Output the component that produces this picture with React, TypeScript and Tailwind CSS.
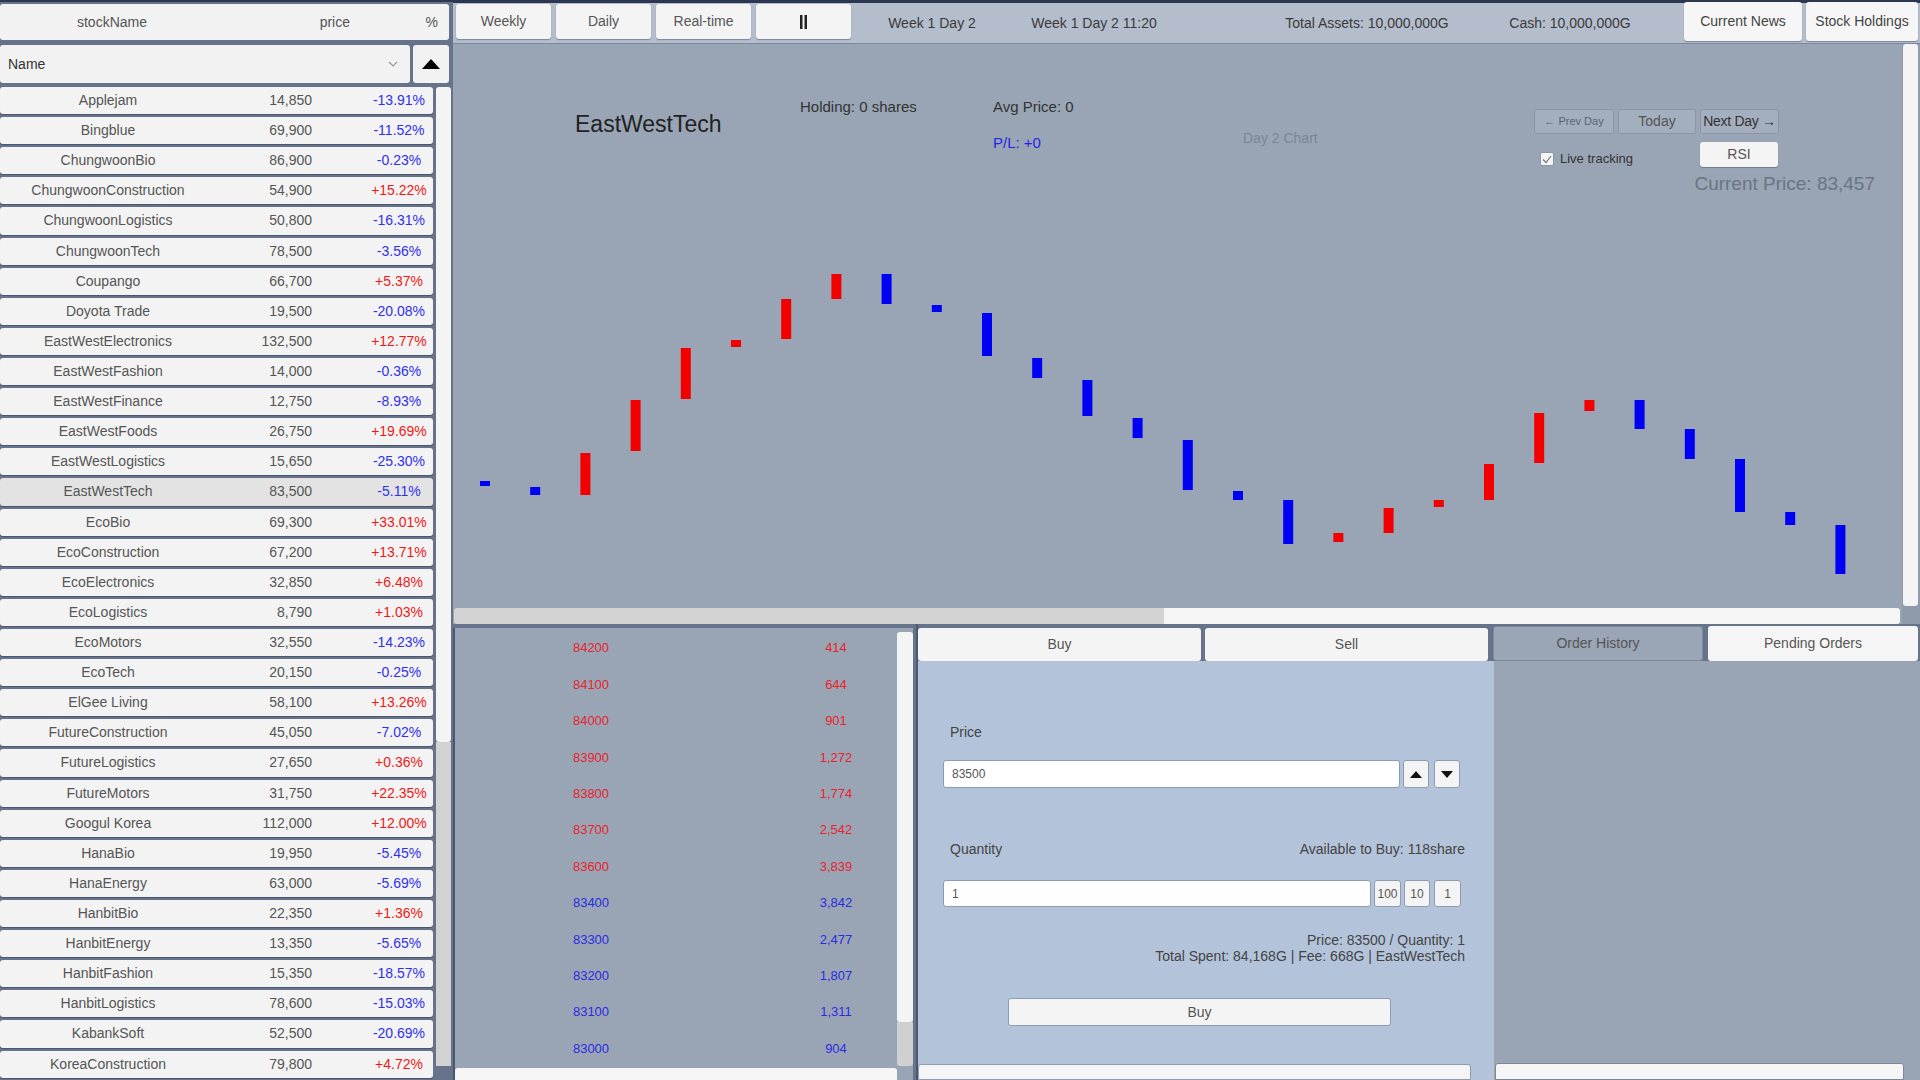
import React from "react";

const stocks: [string, string, string][] = [
  ["Applejam", "14,850", "-13.91%"],
  ["Bingblue", "69,900", "-11.52%"],
  ["ChungwoonBio", "86,900", "-0.23%"],
  ["ChungwoonConstruction", "54,900", "+15.22%"],
  ["ChungwoonLogistics", "50,800", "-16.31%"],
  ["ChungwoonTech", "78,500", "-3.56%"],
  ["Coupango", "66,700", "+5.37%"],
  ["Doyota Trade", "19,500", "-20.08%"],
  ["EastWestElectronics", "132,500", "+12.77%"],
  ["EastWestFashion", "14,000", "-0.36%"],
  ["EastWestFinance", "12,750", "-8.93%"],
  ["EastWestFoods", "26,750", "+19.69%"],
  ["EastWestLogistics", "15,650", "-25.30%"],
  ["EastWestTech", "83,500", "-5.11%"],
  ["EcoBio", "69,300", "+33.01%"],
  ["EcoConstruction", "67,200", "+13.71%"],
  ["EcoElectronics", "32,850", "+6.48%"],
  ["EcoLogistics", "8,790", "+1.03%"],
  ["EcoMotors", "32,550", "-14.23%"],
  ["EcoTech", "20,150", "-0.25%"],
  ["ElGee Living", "58,100", "+13.26%"],
  ["FutureConstruction", "45,050", "-7.02%"],
  ["FutureLogistics", "27,650", "+0.36%"],
  ["FutureMotors", "31,750", "+22.35%"],
  ["Googul Korea", "112,000", "+12.00%"],
  ["HanaBio", "19,950", "-5.45%"],
  ["HanaEnergy", "63,000", "-5.69%"],
  ["HanbitBio", "22,350", "+1.36%"],
  ["HanbitEnergy", "13,350", "-5.65%"],
  ["HanbitFashion", "15,350", "-18.57%"],
  ["HanbitLogistics", "78,600", "-15.03%"],
  ["KabankSoft", "52,500", "-20.69%"],
  ["KoreaConstruction", "79,800", "+4.72%"],
];

// [top, bottom, up] in chart coordinates
const candles: [number, number, boolean][] = [
  [437, 442, false],
  [443, 451, false],
  [409, 451, true],
  [356, 407, true],
  [304, 355, true],
  [296, 303, true],
  [255, 295, true],
  [230, 255, true],
  [230, 260, false],
  [261, 268, false],
  [269, 312, false],
  [314, 334, false],
  [336, 372, false],
  [374, 394, false],
  [396, 446, false],
  [447, 456, false],
  [456, 500, false],
  [489, 498, true],
  [464, 489, true],
  [456, 463, true],
  [420, 456, true],
  [369, 419, true],
  [356, 367, true],
  [356, 385, false],
  [385, 415, false],
  [415, 468, false],
  [468, 481, false],
  [481, 530, false],
];

const book: [string, string, boolean][] = [
  ["84200", "414", true],
  ["84100", "644", true],
  ["84000", "901", true],
  ["83900", "1,272", true],
  ["83800", "1,774", true],
  ["83700", "2,542", true],
  ["83600", "3,839", true],
  ["83400", "3,842", false],
  ["83300", "2,477", false],
  ["83200", "1,807", false],
  ["83100", "1,311", false],
  ["83000", "904", false],
];

function StockList() {
  return (
    <div className="w-[453px] h-[1080px] bg-[#66738b] flex flex-col border-t-[2px] border-[#2c3852]">
      <div className="mt-[2px] h-[36px] w-[449px] rounded-[3px] bg-[#f2f2f2] flex items-center text-[14px] text-[#555]">
        <span className="w-[224px] text-center">stockName</span>
        <span className="w-[126px] text-right">price</span>
        <span className="w-[88px] text-right">%</span>
      </div>
      <div className="mt-[5px] h-[38px] flex gap-[3px]">
        <div className="w-[410px] rounded-[3px] bg-[#f2f2f2] flex items-center justify-between pl-[8px] pr-[12px]">
          <span className="text-[14px] text-[#333]">Name</span>
          <svg width="10" height="6" viewBox="0 0 10 6">
            <path d="M1 1 L5 5 L9 1" fill="none" stroke="#999" strokeWidth="1.2" />
          </svg>
        </div>
        <div className="w-[36px] rounded-[3px] bg-[#f2f2f2] flex items-center justify-center">
          <svg width="18" height="10" viewBox="0 0 18 10">
            <path d="M0 10 L9 0 L18 10 Z" fill="#000" />
          </svg>
        </div>
      </div>
      <div className="mt-[4px] flex flex-1 min-h-0">
        <div className="w-[433px] flex flex-col gap-[3px]">
          {stocks.map(([name, price, pct]) => (
            <div
              key={name}
              className={
                "h-[27.12px] shrink-0 rounded-[3px] flex items-center text-[14px] text-[#555] shadow-[0_1px_0_#4a566c] " +
                (name === "EastWestTech" ? "bg-[#e3e3e3]" : "bg-[#f3f3f3]")
              }
            >
              <span className="w-[216px] shrink-0 text-center whitespace-nowrap">{name}</span>
              <span className="w-[96px] shrink-0 text-right">{price}</span>
              <span
                className={
                  "w-[70px] shrink-0 ml-[52px] text-center " +
                  (pct.startsWith("+") ? "text-[#f01818]" : "text-[#3030f0]")
                }
              >
                {pct}
              </span>
            </div>
          ))}
        </div>
        <div className="ml-[3px] w-[15px] flex flex-col">
          <div className="h-[655px] rounded-[3px] bg-[#f4f4f4]" />
          <div className="h-[324px] bg-[#d2d2d2]" />
        </div>
      </div>
    </div>
  );
}

function TopBar() {
  const btn = "h-[35px] mt-[1px] rounded-[3px] bg-[#f4f4f4] flex items-center justify-center text-[14px] text-[#555] shadow-[0_1px_1px_#7a8599]";
  return (
    <div className="h-[44px] flex bg-[#b4bdcb] border-t-[3px] border-[#2c3852] border-b border-b-[#7d889b] text-[14px] text-[#3a3a3a]">
      <div className="flex gap-[5px] pl-[3px]">
        <div className={btn + " w-[95px]"}>Weekly</div>
        <div className={btn + " w-[95px]"}>Daily</div>
        <div className={btn + " w-[95px]"}>Real-time</div>
        <div className={btn + " w-[95px]"}>
          <svg width="9" height="14" viewBox="0 0 9 14">
            <rect x="1" y="0" width="2.5" height="14" fill="#222" />
            <rect x="5.5" y="0" width="2.5" height="14" fill="#222" />
          </svg>
        </div>
      </div>
      <div className="w-[152px] ml-[5px] flex items-center justify-center whitespace-nowrap">Week 1 Day 2</div>
      <div className="w-[172px] flex items-center justify-center whitespace-nowrap">Week 1 Day 2 11:20</div>
      <div className="w-[170px] ml-[102px] flex items-center justify-center whitespace-nowrap">Total Assets: 10,000,000G</div>
      <div className="w-[220px] ml-[8px] flex items-center justify-center whitespace-nowrap">Cash: 10,000,000G</div>
      <div className="w-[118px] ml-[4px] h-[39px] -mt-[1px] rounded-[3px] bg-[#f6f6f6] flex items-center justify-center text-[#444] shadow-[0_1px_1px_#7a8599]">
        Current News
      </div>
      <div className="w-[112px] ml-[4px] h-[39px] -mt-[1px] rounded-[3px] bg-[#f6f6f6] flex items-center justify-center text-[#444] shadow-[0_1px_1px_#7a8599]">
        Stock Holdings
      </div>
    </div>
  );
}

function Chart() {
  const navBtn = "h-[25px] rounded-[3px] bg-[#a3aebe] border border-[#8a95a6] flex items-center justify-center";
  return (
    <div className="flex h-[580px]">
      <div className="w-[1449px] flex flex-col">
        <div className="relative h-[564px] bg-[#99a5b5] overflow-hidden">
          <svg className="absolute inset-0" width="1449" height="564">
            {candles.map(([t, b, up], i) => (
              <rect
                key={i}
                x={32 + i * 50.2 - 5}
                y={t}
                width="10"
                height={b - t}
                fill={up ? "#f20000" : "#0000f5"}
              />
            ))}
          </svg>
          <div className="relative flex items-start">
            <div className="w-[347px] shrink-0 pl-[122px] pt-[66px] text-[23px] text-[#222] whitespace-nowrap leading-[28px]">
              EastWestTech
            </div>
            <div className="w-[193px] shrink-0 pt-[54px] text-[15px] text-[#333] whitespace-nowrap leading-[18px]">
              Holding: 0 shares
            </div>
            <div className="w-[250px] shrink-0 pt-[54px] text-[15px] leading-[18px] whitespace-nowrap">
              <div className="text-[#333]">Avg Price: 0</div>
              <div className="mt-[18px] text-[#2424e6]">P/L: +0</div>
            </div>
            <div className="w-[291px] shrink-0 pt-[85px] text-[14px] text-[#7b8594] leading-[18px] whitespace-nowrap">
              Day 2 Chart
            </div>
            <div className="w-[341px] shrink-0 pt-[65px] flex flex-col">
              <div className="flex gap-[4px]">
                <div className={navBtn + " w-[80px] text-[11px] text-[#5a6475]"}>← Prev Day</div>
                <div className={navBtn + " w-[78px] text-[14px] text-[#555]"}>Today</div>
                <div className={navBtn + " w-[79px] text-[14px] tracking-[-0.3px] text-[#333] whitespace-nowrap"}>Next Day →</div>
              </div>
              <div className="mt-[8px] flex items-start">
                <div className="ml-[6px] mt-[10px] w-[14px] h-[14px] rounded-[2px] bg-[#f4f4f4] border border-[#8a95a6] flex items-center justify-center">
                  <svg width="10" height="9" viewBox="0 0 10 9">
                    <path d="M1 4.5 L4 7.5 L9 1" fill="none" stroke="#777" strokeWidth="1.2" />
                  </svg>
                </div>
                <span className="ml-[6px] mt-[9px] text-[13px] text-[#333] leading-[16px]">Live tracking</span>
                <div className="ml-[67px] w-[78px] h-[25px] rounded-[3px] bg-[#f4f4f4] shadow-[0_1px_1px_#6f7a8c] flex items-center justify-center text-[14px] text-[#555]">
                  RSI
                </div>
              </div>
              <div className="mt-[5px] text-right text-[19px] leading-[24px] text-[#6a7482] whitespace-nowrap">
                Current Price: 83,457
              </div>
            </div>
          </div>
        </div>
        <div className="h-[16px] flex bg-[#99a5b5] pl-[1px] pr-[2px]">
          <div className="w-[710px] rounded-l-[3px] bg-[#d3d3d3]" />
          <div className="flex-1 rounded-r-[3px] bg-[#f5f5f5]" />
        </div>
      </div>
      <div className="w-[18px] flex flex-col bg-[#8f9aab] pl-[1px] pr-[2px]">
        <div className="h-[562px] rounded-[3px] bg-[#f4f4f4]" />
      </div>
    </div>
  );
}

function OrderBook() {
  return (
    <div className="w-[460px] pt-[4px] flex flex-col">
      <div className="flex-1 bg-[#99a5b5] border-l-[2px] border-[#4b5874] flex flex-col">
        <div className="flex">
          <div className="w-[442px] pt-[2px] flex flex-col">
            {book.map(([p, v, ask]) => (
              <div
                key={p}
                className={
                  "h-[36.4px] flex items-center text-[13px] " +
                  (ask ? "text-[#e8232b]" : "text-[#2b2be0]")
                }
              >
                <span className="w-[272px] shrink-0 text-center">{p}</span>
                <span className="w-[78px] shrink-0 ml-[70px] text-center">{v}</span>
              </div>
            ))}
          </div>
          <div className="w-[16px] pt-[4px] flex flex-col">
            <div className="h-[390px] rounded-[3px] bg-[#f4f4f4]" />
            <div className="h-[44px] bg-[#d0d0d0] rounded-b-[3px]" />
          </div>
        </div>
        <div className="mt-[1px] w-[442px] flex-1 rounded-t-[3px] bg-[#f5f5f5]" />
      </div>
    </div>
  );
}

function OrderForm() {
  const small = "h-[27px] rounded-[3px] bg-[#f4f4f4] border border-[#8e9bb0] flex items-center justify-center text-[12px] text-[#555]";
  return (
    <div className="w-[576px] ml-[3px] flex flex-col border-l-[2px] border-[#4b5874]">
      <div className="pt-[4px] h-[37px] flex bg-[#66738b]">
        <div className="w-[283px] rounded-[3px] bg-[#f4f4f4] flex items-center justify-center text-[14px] text-[#555]">Buy</div>
        <div className="w-[283px] ml-[4px] rounded-[3px] bg-[#f4f4f4] flex items-center justify-center text-[14px] text-[#555]">Sell</div>
      </div>
      <div className="flex-1 bg-[#b3c3da] flex flex-col text-[14px] text-[#444]">
        <div className="pt-[63px] pl-[32px] leading-[16px]">Price</div>
        <div className="mt-[20px] pl-[25px] flex">
          <div className="w-[457px] h-[28px] rounded-[3px] bg-white border border-[#8e9bb0] flex items-center pl-[8px] text-[12px] text-[#555]">
            83500
          </div>
          <div className={small + " ml-[3px] w-[26px] h-[28px]"}>
            <svg width="12" height="7" viewBox="0 0 12 7"><path d="M0 7 L6 0 L12 7 Z" fill="#111" /></svg>
          </div>
          <div className={small + " ml-[5px] w-[26px] h-[28px]"}>
            <svg width="12" height="7" viewBox="0 0 12 7"><path d="M0 0 L6 7 L12 0 Z" fill="#111" /></svg>
          </div>
        </div>
        <div className="mt-[53px] pl-[32px] pr-[27px] flex justify-between leading-[16px]">
          <span>Quantity</span>
          <span>Available to Buy: 118share</span>
        </div>
        <div className="mt-[23px] pl-[25px] flex">
          <div className="w-[428px] h-[27px] rounded-[3px] bg-white border border-[#8e9bb0] flex items-center pl-[8px] text-[12px] text-[#555]">
            1
          </div>
          <div className={small + " ml-[3px] w-[27px]"}>100</div>
          <div className={small + " ml-[3px] w-[26px]"}>10</div>
          <div className={small + " ml-[4px] w-[27px]"}>1</div>
        </div>
        <div className="mt-[25px] pr-[27px] text-right leading-[16px] text-[#444]">
          <div>Price: 83500 / Quantity: 1</div>
          <div>Total Spent: 84,168G | Fee: 668G | EastWestTech</div>
        </div>
        <div className="mt-[34px] ml-[90px] w-[383px] h-[28px] rounded-[3px] bg-[#f4f4f4] border border-[#8e9bb0] flex items-center justify-center text-[14px] text-[#555]">
          Buy
        </div>
        <div className="mt-[38px] w-[553px] flex-1 rounded-t-[3px] bg-[#f5f5f5] border border-[#8e9bb0]" />
      </div>
    </div>
  );
}

function OrdersPanel() {
  return (
    <div className="flex-1 flex flex-col bg-[#66738b]">
      <div className="pt-[2px] h-[37px] flex">
        <div className="w-[210px] ml-[1px] rounded-[3px] bg-[#9aa5b5] border border-[#7b879a] flex items-center justify-center text-[14px] text-[#555]">
          Order History
        </div>
        <div className="w-[210px] ml-[5px] rounded-[3px] bg-[#f5f5f5] flex items-center justify-center text-[14px] text-[#555]">
          Pending Orders
        </div>
      </div>
      <div className="flex-1 bg-[#99a5b5] flex flex-col border-l-[2px] border-[#b3c3da]">
        <div className="flex-1" />
        <div className="h-[17px] ml-[1px] w-[409px] rounded-t-[3px] bg-[#f5f5f5] border border-[#7b879a]" />
      </div>
    </div>
  );
}

export default function App() {
  return (
    <div className="w-[1920px] h-[1080px] overflow-hidden flex bg-[#66738b] font-['Liberation_Sans',Arial,sans-serif]">
      <StockList />
      <div className="w-[1467px] flex flex-col">
        <TopBar />
        <Chart />
        <div className="h-[456px] flex">
          <OrderBook />
          <OrderForm />
          <OrdersPanel />
        </div>
      </div>
    </div>
  );
}
